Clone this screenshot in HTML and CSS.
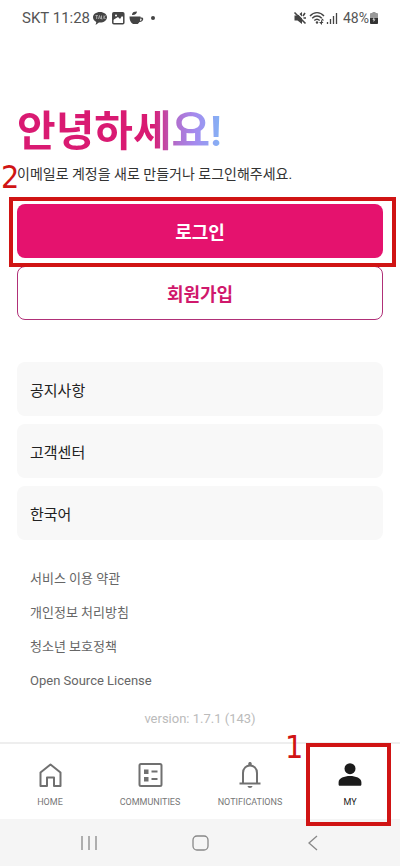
FILE: index.html
```html
<!DOCTYPE html>
<html lang="ko">
<head>
<meta charset="utf-8">
<meta name="viewport" content="width=device-width, initial-scale=1">
<title>MY</title>
<link rel="stylesheet" href="styles.css">
</head>
<body>
<header class="status">
  <div class="status-group">
    <span>SKT 11:28</span>
    <svg class="status-icon talk" viewBox="0 0 16 16" aria-hidden="true"><path fill="#444" d="M8 2C4 2 1 4.300 1 7.300c0 2 1.300 3.700 3.300 4.600L3.600 15l3.300-2.400H8c4 0 7-2.300 7-5.300S12 2 8 2z"/><path stroke="#aaa" fill="none" d="M3.500 5.500h2.400M4.700 5.500v3.500M6.500 9l1-3.500L8.500 9M9.500 5.500V9h1M12 5.500V9M13.500 5.500L12 7.300l1.500 1.700"/></svg>
    <svg class="status-icon" viewBox="0 0 16 16" aria-hidden="true"><rect x="2.800" y="2.800" width="11" height="11" rx="1" fill="none" stroke="#444" stroke-width="1.500"/><path fill="#444" d="M3 3h11v5l-2-2-2 3-2-2-5 3z"/><circle cx="6" cy="5.500" r="1" fill="#fff"/></svg>
    <svg class="status-icon cup" viewBox="0 0 16 16" aria-hidden="true"><path fill="#444" d="M1.500 6.500h11v1h1c3 0 2 4.500-2 4.500-1 1.500-2 2-2 2H5c-2.500-1.500-3.500-4-3.500-7.500zM12.400 8.500l-.5 2.300c2 0 2.300-2.300.5-2.300zM4 5c0-2.500 1.500-3.500 5-3.500C8.700 4 7 5.300 4 5z"/></svg>
    <span class="dot"></span>
  </div>
  <div class="status-group right">
    <svg class="status-icon" viewBox="0 0 16 16" aria-hidden="true"><path fill="#444" d="M2.500 5.500h3l4.500-3.500v12l-4.500-3.500h-3z"/><path stroke="#fff" stroke-width="1.200" d="M4 1.500l11 11"/><path stroke="#444" stroke-width="1.600" fill="none" d="M2.500 2.500l11 11M11 6l2-3M11.500 8H14"/></svg>
    <svg class="status-icon" viewBox="0 0 16 16" aria-hidden="true"><path stroke="#444" stroke-width="1.400" fill="none" d="M1 6c4-4.500 10-4.500 14 0M3.200 8.300c3-3 6.600-3 9.600 0M5.300 10.500c1.800-1.700 3.600-1.700 5.400 0"/><circle cx="8" cy="12.500" r="1.200" fill="#444"/><path fill="#444" d="M10 12h2v-2l2.500 3H13v2zM13.500 8.500l1.500 2h-3z"/></svg>
    <svg class="signal" viewBox="0 0 12 12" aria-hidden="true"><path stroke="#444" stroke-width="1.300" d="M1.500 12v-2M4.500 12V7M7.500 12V4M10.500 12V1"/></svg>
    <span class="percent">48%</span>
    <svg class="battery" viewBox="0 0 8 14" aria-hidden="true"><path fill="#999" d="M2.500 1h3v1H7c1 0 1 1 1 1v4H0V3s0-1 1-1h1.500z"/><path fill="#333" d="M0 7h8v5c0 1-1 1-1 1H1s-1 0-1-1z"/><path fill="#ccc" d="M4 6L2.500 9h1v2L5.500 8.500h-1z"/></svg>
  </div>
</header>

<main class="content">
  <h1 class="title">안녕하세요!</h1>
  <p class="intro">이메일로 계정을 새로 만들거나 로그인해주세요.</p>
  <div class="actions">
    <button class="btn btn-primary" type="button">로그인</button>
    <button class="btn btn-outline" type="button">회원가입</button>
    <span class="mark mark-login"></span>
    <span class="step step-login">2</span>
  </div>
  <div class="menu">
    <button class="menu-item" type="button">공지사항</button>
    <button class="menu-item" type="button">고객센터</button>
    <button class="menu-item" type="button">한국어</button>
  </div>
  <ul class="links">
    <li><a href="#terms">서비스 이용 약관</a></li>
    <li><a href="#privacy">개인정보 처리방침</a></li>
    <li><a href="#youth">청소년 보호정책</a></li>
    <li><a href="#license">Open Source License</a></li>
  </ul>
  <p class="version">version: 1.7.1 (143)</p>
</main>

<nav class="tabs">
  <a class="tab" href="#home">
    <svg class="tab-icon" viewBox="0 0 28 28" aria-hidden="true"><path d="M4.500 25V11.500L14.500 3.500l10 8V25H18v-8.500h-7V25z"/></svg>
    <span>HOME</span>
  </a>
  <a class="tab" href="#communities">
    <svg class="tab-icon" viewBox="0 0 28 28" aria-hidden="true"><rect x="3.500" y="3" width="22" height="22" rx="1.500"/><path d="M15.500 10.500h6M15.500 18h6"/><path class="solid" d="M8 8.500h4.500v4.500H8zM8 16h4.500v4.500H8z"/></svg>
    <span>COMMUNITIES</span>
  </a>
  <a class="tab" href="#notifications">
    <svg class="tab-icon" viewBox="0 0 28 28" aria-hidden="true"><path d="M7 22.500V12c0-10 14-10 14 0v10.500M3.500 22.500h21"/><path class="solid" d="M12.300 4V2.500c0-2 3.400-2 3.400 0V4zM11.500 25h5c-.3 2.500-4.700 2.500-5 0z"/></svg>
    <span>NOTIFICATIONS</span>
  </a>
  <a class="tab active" href="#my">
    <svg class="tab-icon" viewBox="0 0 28 28" aria-hidden="true"><circle class="solid" cx="14" cy="7.700" r="5.500"/><path class="solid" d="M2.600 23.500v-2.300c0-8.300 22.800-8.300 22.800 0v2.300c0 .8-.6 1.300-1.300 1.300H3.900c-.7 0-1.300-.5-1.300-1.300z"/></svg>
    <span>MY</span>
    <span class="mark mark-my"></span>
    <span class="step step-my">1</span>
  </a>
</nav>

<footer class="system">
  <button class="sys" type="button" aria-label="Recents"><svg viewBox="0 0 20 20"><path d="M3 3v14M10 3v14M17 3v14"/></svg></button>
  <button class="sys" type="button" aria-label="Home"><svg viewBox="0 0 20 20"><rect x="3" y="3" width="15" height="14" rx="4"/></svg></button>
  <button class="sys" type="button" aria-label="Back"><svg viewBox="0 0 20 20"><path d="M16 3l-8 7 8 7"/></svg></button>
</footer>
</body>
</html>
```

FILE: styles.css
```css
* {
  box-sizing: border-box;
}

body {
  margin: 0;
  min-height: 100vh;
  display: flex;
  flex-direction: column;
  background: #fff;
  color: #222;
  font-family: Roboto, "Noto Sans CJK KR", sans-serif;
}

button {
  font: inherit;
  cursor: pointer;
}

a {
  color: inherit;
  text-decoration: none;
}

.status {
  height: 36px;
  padding: 0 22px;
  display: flex;
  align-items: center;
  justify-content: space-between;
  color: #555;
  font-size: 15px;
}

.status-group {
  display: flex;
  align-items: center;
  gap: 2px;
}

.right {
  gap: 1px;
}

.status-icon {
  width: 16px;
  height: 16px;
}

.dot {
  width: 4px;
  height: 4px;
  margin-left: 5px;
  border-radius: 50%;
  background: #444;
}

.signal {
  width: 12px;
  height: 12px;
}

.percent {
  margin-left: 4px;
  font-size: 14px;
}

.battery {
  width: 8px;
  height: 14px;
}

.content {
  flex: 1;
  padding: 66px 17px 0;
}

.title {
  width: max-content;
  margin: 0;
  font-size: 42px;
  line-height: 60px;
  font-weight: 700;
  color: transparent;
  background: linear-gradient(90deg, #d91a72 0, #d91a72 66%, #b070d0 78%, #a48bef 87%, #82b4f5 100%);
  -webkit-background-clip: text;
  background-clip: text;
}

.intro {
  margin: 0;
  padding: 2px 0 20px;
  font-size: 14px;
  line-height: 20px;
  color: #333;
}

.actions {
  position: relative;
  display: flex;
  flex-direction: column;
  gap: 8px;
}

.btn {
  height: 54px;
  padding: 0;
  border-radius: 8px;
  font-size: 18px;
  font-weight: 700;
}

.btn-primary {
  border: 0;
  background: #e5126e;
  color: #fff;
}

.btn-outline {
  border: 1px solid #b03078;
  background: #fff;
  color: #d0186c;
}

.mark {
  position: absolute;
  border: 4px solid #d01414;
  pointer-events: none;
}

.mark-login {
  top: -7px;
  right: -13px;
  bottom: 53px;
  left: -8px;
}

.step {
  position: absolute;
  font-family: "DejaVu Sans Condensed", "DejaVu Sans", sans-serif;
  font-size: 32px;
  line-height: 32px;
  color: #d01414;
}

.step-login {
  top: -43px;
  left: -16px;
}

.menu {
  margin-top: 42px;
  display: flex;
  flex-direction: column;
  gap: 8px;
}

.menu-item {
  height: 54px;
  padding: 0 13px;
  border: 0;
  border-radius: 8px;
  background: #f8f8f8;
  color: #222;
  font-size: 15px;
  text-align: left;
}

.links {
  margin: 22px 0 0;
  padding: 0 13px;
  list-style: none;
  font-size: 13px;
  line-height: 34px;
  color: #666;
}

.links li {
  height: 34px;
}

.version {
  margin: 11px 0 0;
  font-size: 13px;
  line-height: 20px;
  text-align: center;
  color: #bbb;
}

.tabs {
  height: 77px;
  border-top: 2px solid #eee;
  display: grid;
  grid-template-columns: repeat(4, 1fr);
}

.tab {
  position: relative;
  padding-top: 17px;
  display: flex;
  flex-direction: column;
  align-items: center;
  gap: 7px;
  font-size: 9px;
  line-height: 12px;
  color: #777;
}

.tab-icon {
  width: 28px;
  height: 28px;
  fill: none;
  stroke: #707070;
  stroke-width: 2;
  stroke-linejoin: round;
}

.tab-icon .solid {
  fill: #707070;
  stroke: none;
}

.active {
  color: #222;
}

.tab.active .solid {
  fill: #1b1b1b;
}

.mark-my {
  top: -1px;
  right: 9px;
  bottom: -7px;
  left: 6px;
}

.step-my {
  top: -13px;
  left: -15px;
}

.system {
  height: 47px;
  padding: 0 33px;
  display: grid;
  grid-template-columns: repeat(3, 1fr);
  background: #f5f5f5;
}

.sys {
  padding: 0;
  border: 0;
  background: none;
  display: flex;
  align-items: center;
  justify-content: center;
}

.sys svg {
  width: 20px;
  height: 20px;
  fill: none;
  stroke: #888;
  stroke-width: 1.3;
}
```
